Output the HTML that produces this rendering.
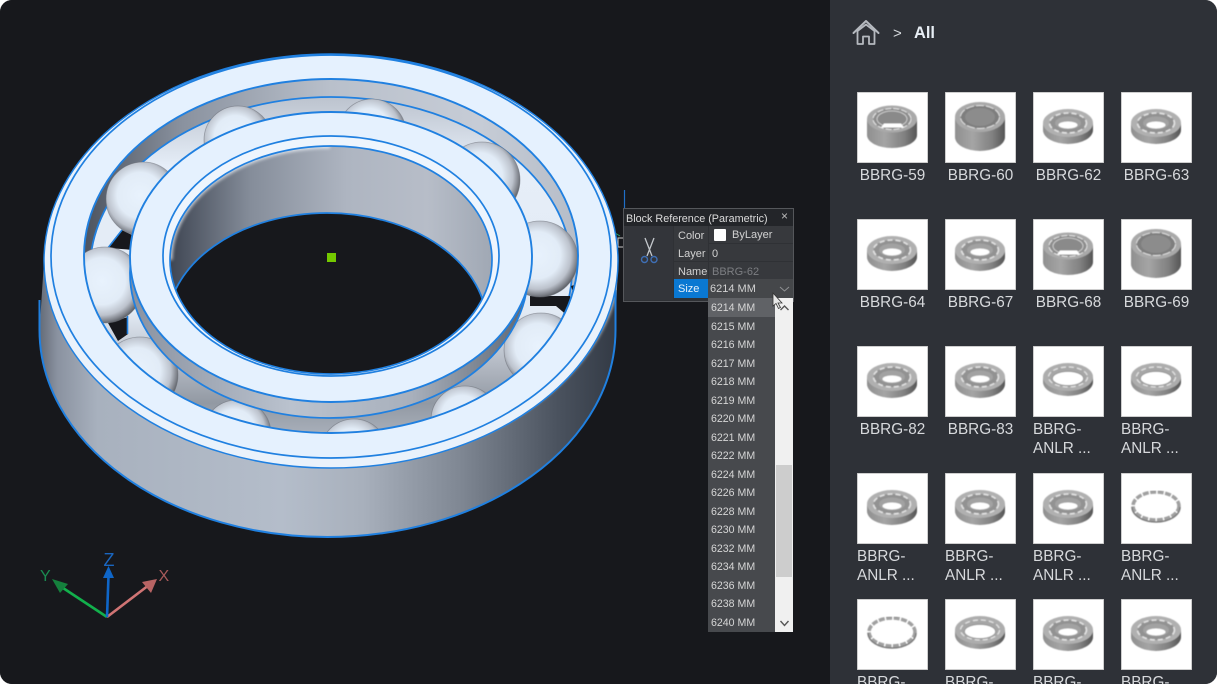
<!DOCTYPE html>
<html><head><meta charset="utf-8">
<style>
html,body{margin:0;padding:0;background:#fff;width:1217px;height:684px;overflow:hidden}
body{font-family:"Liberation Sans",sans-serif}
#app{position:absolute;left:0;top:0;width:1217px;height:684px;background:#17181c;border-radius:12px;overflow:hidden}
#main{position:absolute;left:0;top:0}
#side{position:absolute;left:830px;top:0;width:387px;height:684px;background:#2e3137;overflow:hidden}
.c{position:absolute;width:71px}
.c svg{display:block;width:71px;height:71px}
.n{color:#d7d9dc;font-size:15.3px;line-height:19px;margin-top:3px;white-space:nowrap}
.s{text-align:center;margin-left:-10px;margin-right:-10px}
.ttl{position:absolute;left:626px;top:210px;font-size:10.8px;line-height:18px;color:#dcdcdc;white-space:nowrap}
.a{position:absolute;font-size:11px;color:#d2d2d2;white-space:nowrap;line-height:18px}
#panel{position:absolute;left:624px;top:209px;width:169px;height:92px;background:#2f3135;box-shadow:0 0 0 1px #55575b}
.box{position:absolute}
#list{position:absolute;left:708px;top:299px;width:67px;height:333.5px}
#list div{height:18.53px;line-height:18.53px;font-size:10.6px;color:#d6d6d6;padding-left:3px;white-space:nowrap}
</style></head><body>
<div id="app">
<svg id="main" width="830" height="684" viewBox="0 0 830 684">
<defs>
<filter id="b2" x="-10%" y="-10%" width="120%" height="120%"><feGaussianBlur stdDeviation="1.6"/></filter>
<linearGradient id="gw" gradientUnits="userSpaceOnUse" x1="40" y1="0" x2="616" y2="0">
<stop offset="0" stop-color="#656c78"/><stop offset=".03" stop-color="#8a92a0"/><stop offset=".1" stop-color="#a8b1be"/><stop offset=".42" stop-color="#b4bdca"/><stop offset=".56" stop-color="#a8b0bc"/><stop offset=".73" stop-color="#7f8793"/><stop offset=".9" stop-color="#4a525e"/><stop offset="1" stop-color="#333a45"/>
</linearGradient>
<linearGradient id="gc" gradientUnits="userSpaceOnUse" x1="84" y1="0" x2="578" y2="0">
<stop offset="0" stop-color="#4d5460"/><stop offset=".2" stop-color="#8a929f"/><stop offset=".5" stop-color="#b9c0cb"/><stop offset=".8" stop-color="#c6ccd6"/><stop offset="1" stop-color="#b6bdc8"/>
</linearGradient>
<linearGradient id="gf" gradientUnits="userSpaceOnUse" x1="0" y1="97" x2="0" y2="445">
<stop offset="0" stop-color="#bcc3ce"/><stop offset=".2" stop-color="#e6eef8"/><stop offset=".62" stop-color="#e2eaf4"/><stop offset=".78" stop-color="#b0b6c0"/><stop offset=".88" stop-color="#9299a3"/><stop offset="1" stop-color="#b0b7c2"/>
</linearGradient>
<linearGradient id="gi" gradientUnits="userSpaceOnUse" x1="130" y1="0" x2="532" y2="0">
<stop offset="0" stop-color="#8a92a0"/><stop offset=".4" stop-color="#bac2ce"/><stop offset=".7" stop-color="#a8b0bc"/><stop offset="1" stop-color="#5c6470"/>
</linearGradient>
<linearGradient id="gb" gradientUnits="userSpaceOnUse" x1="170" y1="0" x2="492" y2="0">
<stop offset="0" stop-color="#3f4653"/><stop offset=".25" stop-color="#858d9a"/><stop offset=".55" stop-color="#aeb5c1"/><stop offset=".8" stop-color="#b7bdc8"/><stop offset="1" stop-color="#a0a8b4"/>
</linearGradient>
<radialGradient id="ball" cx=".46" cy=".45" r=".56">
<stop offset="0" stop-color="#e8f2fd"/><stop offset=".55" stop-color="#e2ecf7"/><stop offset=".8" stop-color="#bcc2cc"/><stop offset=".94" stop-color="#7c8088"/><stop offset="1" stop-color="#5c6066"/>
</radialGradient>
<clipPath id="cC"><ellipse cx="331" cy="256" rx="247" ry="177"/></clipPath>
<clipPath id="cB"><ellipse cx="331" cy="260" rx="161" ry="114"/></clipPath>
<clipPath id="cW"><path d="M44 261L39.500 330A288 207 0 0 0 615.500 330L618 261Z"/></clipPath>
</defs>
<rect width="830" height="684" fill="#17181c"/>
<!-- gizmo behind panel -->
<path d="M624.500 190V268" stroke="#1f6fc8" stroke-width="1.200" fill="none"/>
<path d="M581 213L620 236" stroke="#23a06a" stroke-width="1" fill="none"/>
<path d="M602 257L620 241" stroke="#c06a86" stroke-width="1" fill="none"/>
<rect x="618" y="238" width="7" height="9" fill="#17181c" stroke="#c8c8c8" stroke-width="1"/>
<!-- outer wall -->
<path d="M44 261L39.500 330A288 207 0 0 0 615.500 330L618 261Z" fill="url(#gw)"/>
<g clip-path="url(#cW)"><path d="M420 452A287 207 0 0 0 618 261" fill="none" stroke="#e4ebf3" stroke-width="7" filter="url(#b2)" opacity=".75"/></g>
<path d="M39.500 300V330A288 207 0 0 0 615.500 330V290" fill="none" stroke="#2080e0" stroke-width="2"/>
<!-- outer face -->
<ellipse cx="331" cy="261" rx="287" ry="207" fill="#eaf2fb" stroke="#2080e0" stroke-width="1.500"/>
<ellipse cx="331" cy="256.500" rx="280" ry="201.500" fill="#e5f1fe" stroke="#2080e0" stroke-width="1.700"/>
<!-- cavity -->
<g clip-path="url(#cC)">
<rect x="80" y="75" width="505" height="365" fill="url(#gc)"/>
<ellipse cx="331" cy="270" rx="241" ry="173" fill="url(#gf)" stroke="#2080e0" stroke-width="1.800"/>
<path d="M108 248L122 230L134 236V250ZM108 323L128 317V334L118 341ZM530 296H570L575 322L556 306H530ZM571 286L581 283L581 298L575 298Z" fill="#17181c"/>
<path d="M122 230L97 262M127.500 316V334" stroke="#2080e0" stroke-width="1.600" fill="none"/>
<g fill="url(#ball)" stroke="#6a6e76" stroke-opacity=".55" stroke-width=".8">
<circle cx="238" cy="140" r="34"/>
<circle cx="372" cy="133" r="34"/>
<circle cx="482" cy="180" r="38"/>
<circle cx="540" cy="259" r="38"/>
<circle cx="541" cy="350" r="37"/>
<circle cx="465" cy="420" r="34"/>
<circle cx="354" cy="453" r="34"/>
<circle cx="237" cy="434" r="34"/>
<circle cx="140" cy="375" r="38"/>
<circle cx="105" cy="285" r="38"/>
<circle cx="143" cy="199" r="37"/>
</g>
</g>
<ellipse cx="331" cy="256" rx="247" ry="177" fill="none" stroke="#2080e0" stroke-width="1.900"/>
<!-- inner ring wall -->
<ellipse cx="329" cy="273" rx="199" ry="145" fill="url(#gi)" stroke="#2080e0" stroke-width="1.800"/>
<!-- inner ring face -->
<ellipse cx="331" cy="257" rx="201" ry="145" fill="#e5f1fe" stroke="#2080e0" stroke-width="1.900"/>
<ellipse cx="331" cy="256" rx="168" ry="120" fill="#eef5fd" stroke="#2080e0" stroke-width="1.700"/>
<!-- bore -->
<g clip-path="url(#cB)">
<rect x="160" y="140" width="345" height="240" fill="url(#gb)"/>
<path d="M170 260A161 114 0 0 1 330 146" fill="none" stroke="#f0f5fb" stroke-width="5" filter="url(#b2)" opacity=".75"/>
<ellipse cx="327" cy="326" rx="160" ry="113" fill="#17181c" stroke="#2080e0" stroke-width="1.800"/>
</g>
<ellipse cx="331" cy="260" rx="161" ry="114" fill="none" stroke="#2080e0" stroke-width="1.700"/>
<rect x="327" y="253" width="9" height="9" fill="#74c800"/>
<!-- triad -->
<path d="M107 617L60 586" stroke="#12b04c" stroke-width="2.600"/>
<path d="M52 579L68 584L60 593Z" fill="#15803d"/>
<path d="M107 617L149 585" stroke="#d07474" stroke-width="2.600"/>
<path d="M157 579L151 593L142 582Z" fill="#b86464"/>
<path d="M107 617L108.500 576" stroke="#0f66c8" stroke-width="2.600"/>
<path d="M108.500 566L114 578H103Z" fill="#0f66c8"/>
<text x="103.500" y="566" font-size="18" fill="#1a66c0" font-family="Liberation Sans">Z</text>
<text x="40" y="581" font-size="16" fill="#1a8a50" font-family="Liberation Sans">Y</text>
<text x="158.500" y="581" font-size="16" fill="#a85a5a" font-family="Liberation Sans">X</text>
</svg>

<!-- property panel -->
<div id="panel"></div>
<div class="box" style="left:624px;top:209px;width:169px;height:17px;background:#232529"></div>
<div class="box" style="left:624px;top:226px;width:49px;height:74px;background:#33353a"></div>
<div class="box" style="left:674px;top:226px;width:34px;height:18px;background:#37393d"></div>
<div class="box" style="left:709px;top:226px;width:84px;height:17px;background:#37393d"></div>
<div class="box" style="left:674px;top:244px;width:34px;height:17px;background:#37393d"></div>
<div class="box" style="left:709px;top:244px;width:84px;height:17px;background:#37393d"></div>
<div class="box" style="left:674px;top:262px;width:34px;height:17px;background:#37393d"></div>
<div class="box" style="left:709px;top:262px;width:84px;height:17px;background:#37393d"></div>
<div class="box" style="left:674px;top:279px;width:34px;height:19px;background:#0a78d2"></div>
<div class="box" style="left:708px;top:279px;width:85px;height:19px;background:#45474a"></div>
<div class="ttl">Block Reference (Parametric)</div>
<div class="a" style="left:781px;top:207px;font-size:12px;color:#bbb">×</div>
<div class="a" style="left:678px;top:227px">Color</div>
<div class="box" style="left:714px;top:229px;width:12px;height:12px;background:#fff;border-radius:1px"></div>
<div class="a" style="left:732px;top:226px">ByLayer</div>
<div class="a" style="left:678px;top:245px">Layer</div>
<div class="a" style="left:712px;top:245px">0</div>
<div class="a" style="left:678px;top:263px">Name</div>
<div class="a" style="left:712px;top:263px;color:#7c7e82">BBRG-62</div>
<div class="a" style="left:678px;top:280px;color:#e6f0fa">Size</div>
<div class="a" style="left:710px;top:280px">6214 MM</div>
<svg class="box" style="left:624px;top:226px" width="169" height="74" viewBox="624 226 169 74">
<path d="M645 238L652 256M654 238L647 256" stroke="#c4c8cc" stroke-width="1.300" fill="none"/>
<circle cx="644.500" cy="259.500" r="3" fill="none" stroke="#3f6fb5" stroke-width="1.400"/>
<circle cx="654" cy="259.500" r="3" fill="none" stroke="#3f6fb5" stroke-width="1.400"/>
<path d="M780 287L784.500 291L789 287" stroke="#8f9194" stroke-width="1" fill="none"/>
</svg>

<!-- dropdown -->
<div class="box" style="left:708px;top:298px;width:67px;height:334px;background:#47494d"></div>
<div class="box" style="left:775px;top:298px;width:18px;height:334px;background:#f0f0f0"></div>
<div class="box" style="left:776px;top:465px;width:16px;height:112px;background:#cdcdcd"></div>
<div class="box" style="left:708px;top:298px;width:67px;height:18.500px;background:#606266"></div>
<div id="list"><div>6214 MM</div><div>6215 MM</div><div>6216 MM</div><div>6217 MM</div><div>6218 MM</div><div>6219 MM</div><div>6220 MM</div><div>6221 MM</div><div>6222 MM</div><div>6224 MM</div><div>6226 MM</div><div>6228 MM</div><div>6230 MM</div><div>6232 MM</div><div>6234 MM</div><div>6236 MM</div><div>6238 MM</div><div>6240 MM</div></div>
<svg class="box" style="left:770px;top:285px" width="26" height="350" viewBox="770 285 26 350">
<path d="M780.500 310L784.500 306L788.500 310" stroke="#555" stroke-width="1.400" fill="none"/>
<path d="M780.500 621L784.500 625.500L788.500 621" stroke="#555" stroke-width="1.400" fill="none"/>
<path d="M773 293V306L776 303.500L778.500 308.500L780.500 307.500L778 303H782Z" fill="#e8e8e8" stroke="#333" stroke-width=".8"/>
</svg>

<!-- right side -->
<div id="side">
<svg class="box" style="left:22px;top:19px" width="28" height="27" viewBox="0 0 28 27">
<path d="M1.500 14L14 2L26.500 14" fill="none" stroke="#b5b9bf" stroke-width="2" stroke-linejoin="round" stroke-linecap="round"/>
<path d="M5.500 12L14 5.500L22.500 12V25H17V17.500H11V25H5.500Z" fill="none" stroke="#b5b9bf" stroke-width="1.800" stroke-linejoin="round"/>
</svg>
<div class="box" style="left:63px;top:25px;font-size:15px;line-height:18px;color:#d6dade">&gt;</div>
<div class="box" style="left:84px;top:23px;font-size:16.4px;line-height:20px;font-weight:bold;color:#e8eef5">All</div>

<svg width="0" height="0" style="position:absolute">
<defs>
<filter id="bl" x="-5%" y="-5%" width="110%" height="110%"><feGaussianBlur stdDeviation=".45"/></filter>
<linearGradient id="tw" x1="0" x2="1" y1="0" y2="0"><stop offset="0" stop-color="#8f8f8f"/><stop offset=".35" stop-color="#a5a5a5"/><stop offset=".75" stop-color="#808080"/><stop offset="1" stop-color="#555"/></linearGradient>
<symbol id="w" viewBox="0 0 71 71">
<rect width="71" height="71" fill="#fff" stroke="#bdbdbd" stroke-width="1.500"/>
<g filter="url(#bl)">
<path d="M10 27V43A25 13 0 0 0 60 43V27Z" fill="url(#tw)"/>
<ellipse cx="35" cy="27" rx="25" ry="13.500" fill="#a9a9a9"/>
<ellipse cx="35" cy="27" rx="19" ry="10.500" fill="#8d8d8d" stroke="#e5e5e5" stroke-width="1" stroke-dasharray="6 2"/>
<ellipse cx="35" cy="27" rx="15" ry="8" fill="#8a8a8a" stroke="#d8d8d8" stroke-width=".8"/>
<path d="M24 35.500H47L44 31.500H27Z" fill="#fff"/>
</g>
</symbol>
<symbol id="t" viewBox="0 0 71 71">
<rect width="71" height="71" fill="#fff" stroke="#bdbdbd" stroke-width="1.500"/>
<g filter="url(#bl)">
<path d="M10 25V45A25 14 0 0 0 60 45V25Z" fill="url(#tw)"/>
<ellipse cx="35" cy="25" rx="25" ry="15" fill="#a9a9a9"/>
<ellipse cx="35" cy="25" rx="19.500" ry="11.500" fill="#7e7e7e" stroke="#e0e0e0" stroke-width="1" stroke-dasharray="8 2"/>
<ellipse cx="35" cy="25" rx="15" ry="9" fill="#8c8c8c"/>
</g>
</symbol>
<symbol id="b" viewBox="0 0 71 71">
<rect width="71" height="71" fill="#fff" stroke="#bdbdbd" stroke-width="1.500"/>
<g filter="url(#bl)">
<path d="M10 31V38A25 14 0 0 0 60 38V31Z" fill="url(#tw)"/>
<ellipse cx="35" cy="31" rx="25" ry="14" fill="#b0b0b0"/>
<ellipse cx="35" cy="31" rx="18.500" ry="10" fill="#929292" stroke="#e2e2e2" stroke-width="1.600" stroke-dasharray="5 3"/>
<ellipse cx="35" cy="31" rx="13" ry="6.500" fill="#a2a2a2"/>
<ellipse cx="35" cy="33" rx="9.500" ry="3.500" fill="#fff"/>
</g>
</symbol>
<symbol id="r" viewBox="0 0 71 71">
<rect width="71" height="71" fill="#fff" stroke="#bdbdbd" stroke-width="1.500"/>
<g filter="url(#bl)">
<path d="M10 31V36A25 14 0 0 0 60 36V31Z" fill="url(#tw)"/>
<ellipse cx="35" cy="31" rx="25" ry="14" fill="#adadad"/>
<ellipse cx="35" cy="31" rx="19.500" ry="10" fill="#a6a6a6" stroke="#e2e2e2" stroke-width="1.300" stroke-dasharray="5 3"/>
<ellipse cx="35" cy="32.500" rx="15.500" ry="7" fill="#fff" stroke="#8a8a8a" stroke-width=".7"/>
</g>
</symbol>
<symbol id="h" viewBox="0 0 71 71">
<rect width="71" height="71" fill="#fff" stroke="#bdbdbd" stroke-width="1.500"/>
<g filter="url(#bl)">
<ellipse cx="35" cy="33" rx="23" ry="14" fill="none" stroke="#a0a0a0" stroke-width="3.500" stroke-dasharray="6 1.500"/>
<path d="M11 34A24 15 0 0 0 59 34" fill="none" stroke="#7c7c7c" stroke-width="1.500"/>
</g>
</symbol>
</defs>
</svg>

<div class="c" style="left:27px;top:92px"><svg><use href="#w"/></svg><div class="n s">BBRG-59</div></div>
<div class="c" style="left:115px;top:92px"><svg><use href="#t"/></svg><div class="n s">BBRG-60</div></div>
<div class="c" style="left:203px;top:92px"><svg><use href="#b"/></svg><div class="n s">BBRG-62</div></div>
<div class="c" style="left:291px;top:92px"><svg><use href="#b"/></svg><div class="n s">BBRG-63</div></div>
<div class="c" style="left:27px;top:219px"><svg><use href="#b"/></svg><div class="n s">BBRG-64</div></div>
<div class="c" style="left:115px;top:219px"><svg><use href="#b"/></svg><div class="n s">BBRG-67</div></div>
<div class="c" style="left:203px;top:219px"><svg><use href="#w"/></svg><div class="n s">BBRG-68</div></div>
<div class="c" style="left:291px;top:219px"><svg><use href="#t"/></svg><div class="n s">BBRG-69</div></div>
<div class="c" style="left:27px;top:346px"><svg><use href="#b"/></svg><div class="n s">BBRG-82</div></div>
<div class="c" style="left:115px;top:346px"><svg><use href="#b"/></svg><div class="n s">BBRG-83</div></div>
<div class="c" style="left:203px;top:346px"><svg><use href="#r"/></svg><div class="n">BBRG-<br>ANLR ...</div></div>
<div class="c" style="left:291px;top:346px"><svg><use href="#r"/></svg><div class="n">BBRG-<br>ANLR ...</div></div>
<div class="c" style="left:27px;top:473px"><svg><use href="#b"/></svg><div class="n">BBRG-<br>ANLR ...</div></div>
<div class="c" style="left:115px;top:473px"><svg><use href="#b"/></svg><div class="n">BBRG-<br>ANLR ...</div></div>
<div class="c" style="left:203px;top:473px"><svg><use href="#b"/></svg><div class="n">BBRG-<br>ANLR ...</div></div>
<div class="c" style="left:291px;top:473px"><svg><use href="#h"/></svg><div class="n">BBRG-<br>ANLR ...</div></div>
<div class="c" style="left:27px;top:599px"><svg><use href="#h"/></svg><div class="n">BBRG-<br>ANLR ...</div></div>
<div class="c" style="left:115px;top:599px"><svg><use href="#r"/></svg><div class="n">BBRG-<br>ANLR ...</div></div>
<div class="c" style="left:203px;top:599px"><svg><use href="#b"/></svg><div class="n">BBRG-<br>ANLR ...</div></div>
<div class="c" style="left:291px;top:599px"><svg><use href="#b"/></svg><div class="n">BBRG-<br>ANLR ...</div></div>
</div>
</div>
</body></html>
